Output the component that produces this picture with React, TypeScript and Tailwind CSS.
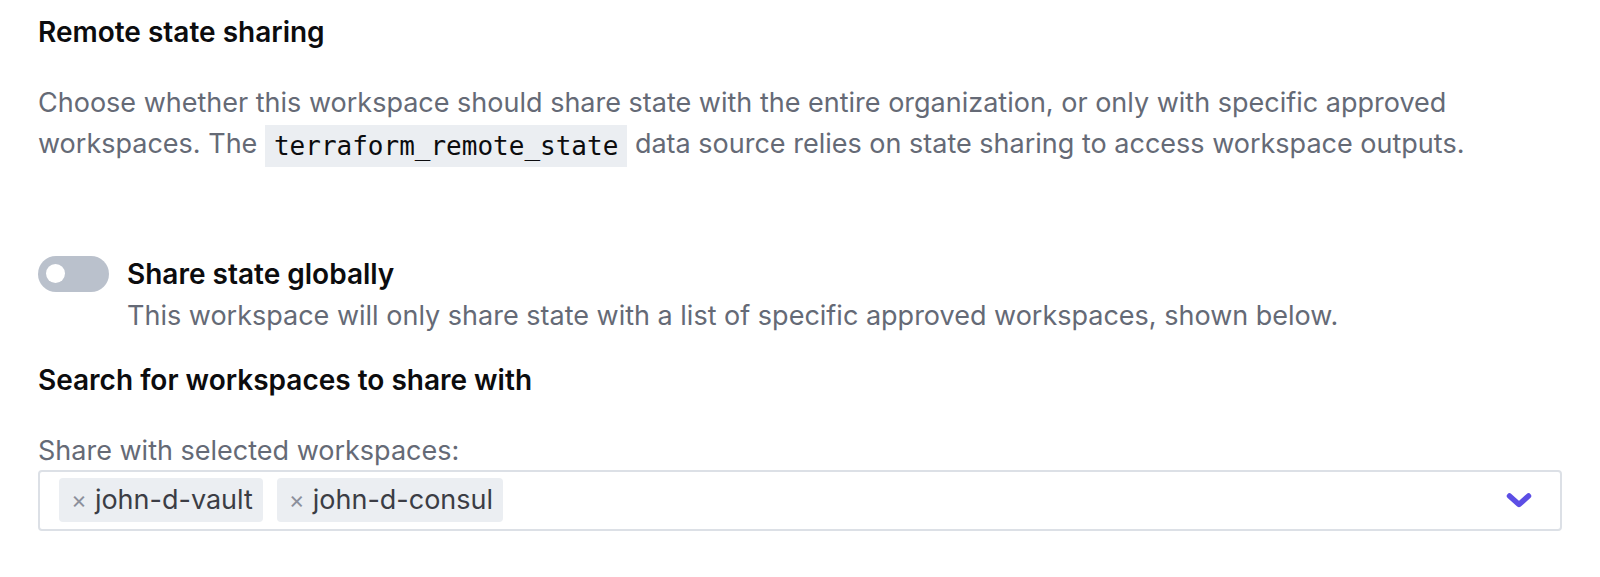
import React from "react";

export default function App() {
  const sans = { fontFamily: "Inter, 'Noto Sans', sans-serif" };
  return (
    <div className="min-h-[577px] w-full bg-white px-[38px] pt-[16px] text-[27px]" style={sans}>
      <h2 className="text-[28px] font-semibold leading-[32px] text-[#0c0c0e]">Remote state sharing</h2>
      <p className="mt-[34px] leading-[41px] text-[#656a76]">
        Choose whether this workspace should share state with the entire organization, or only with specific approved
        <br />
        workspaces. The{" "}
        <code
          className="inline-block bg-[#ebeef2] px-[9px] leading-[42px] text-[26px] text-[#0c0c0e] align-middle"
          style={{ fontFamily: "'DejaVu Sans Mono', monospace" }}
        >
          terraform_remote_state
        </code>{" "}
        data source relies on state sharing to access workspace outputs.
      </p>

      <div className="mt-[89px] flex gap-[18px]">
        <div className="flex h-[36px] w-[71px] shrink-0 items-center rounded-full bg-[#bac1cc] px-[8px]">
          <div className="h-[19px] w-[19px] rounded-full bg-white" />
        </div>
        <div>
          <div className="text-[28px] font-semibold leading-[36px] text-[#0c0c0e]">Share state globally</div>
          <div className="mt-[4px] leading-[40px] text-[#656a76]">
            This workspace will only share state with a list of specific approved workspaces, shown below.
          </div>
        </div>
      </div>

      <h3 className="mt-[28px] text-[28px] font-semibold leading-[32px] text-[#0c0c0e]">Search for workspaces to share with</h3>

      <div className="mt-[39px] leading-[32px] text-[#656a76]">Share with selected workspaces:</div>
      <div className="mt-[3px] flex h-[61px] items-center rounded-[4px] border-2 border-[#dce0e6] pl-[19px] pr-[28px]">
        <div className="flex flex-1 gap-[14px]">
          {["john-d-vault", "john-d-consul"].map((t) => (
            <div key={t} className="flex h-[44px] items-center rounded-[4px] bg-[#ebeef2] pl-[12px] pr-[10px] text-[#3b3d45]">
              <span className="mr-[8px] text-[24px] text-[#8c909c]">×</span>
              <span>{t}</span>
            </div>
          ))}
        </div>
        <svg width="26" height="17" viewBox="0 0 26 17" fill="none">
          <path d="M3.5 4 L13 12.5 L22.5 4" stroke="#5c4ee5" strokeWidth="5.5" strokeLinecap="round" strokeLinejoin="round" />
        </svg>
      </div>
    </div>
  );
}
